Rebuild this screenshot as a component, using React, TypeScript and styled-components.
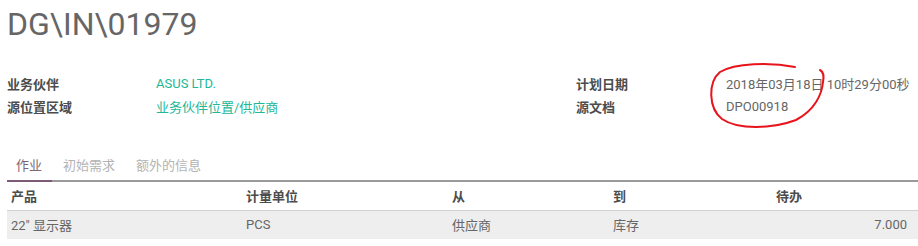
import React from "react";
import styled, { createGlobalStyle } from "styled-components";

const Global = createGlobalStyle`
  html, body { margin: 0; padding: 0; background: #fff; }
  body {
    font-family: Roboto, "Noto Sans CJK SC", sans-serif;
    font-size: 13px;
    color: #4c4c4c;
    width: 918px;
    height: 246px;
    overflow: hidden;
  }
`;

const Sheet = styled.div`
  position: relative;
  padding: 0 0 0 7px;
`;

const Title = styled.h1`
  margin: 0;
  padding-top: 5px;
  height: 60px;
  font-family: Roboto, sans-serif;
  font-weight: 400;
  font-size: 32px;
  line-height: 38px;
  color: #666666;
`;

const Groups = styled.div`
  display: grid;
  grid-template-columns: 569px 1fr;
  margin-top: 7px;
`;

const Group = styled.div<{ $label: number }>`
  display: grid;
  grid-template-columns: ${(p) => p.$label}px 1fr;
  grid-auto-rows: 23px;
  align-items: center;
`;

const Label = styled.div`
  font-weight: 700;
  color: #4c4c4c;
  white-space: nowrap;
`;

const Value = styled.div<{ $link?: boolean }>`
  color: ${(p) => (p.$link ? "#21b799" : "#666666")};
  white-space: nowrap;
`;

const Tabs = styled.div`
  display: flex;
  margin-top: 35px;
  border-bottom: 2px solid #9a9a9a;
`;

const Tab = styled.div<{ $active?: boolean }>`
  padding: 0 10px 0 9px;
  height: 27px;
  line-height: 26px;
  margin-bottom: -2px;
  font-size: 13px;
  color: ${(p) => (p.$active ? "#7c6577" : "#b3b3b3")};
  border-bottom: 2px solid ${(p) => (p.$active ? "#7c5a78" : "transparent")};
  margin-right: 2px;
`;

const Table = styled.table`
  width: 911px;
  border-collapse: collapse;
  table-layout: fixed;
`;

const Th = styled.th<{ $w?: number }>`
  box-sizing: border-box;
  width: ${(p) => (p.$w ? `${p.$w}px` : "auto")};
  text-align: left;
  font-weight: 700;
  color: #4c4c4c;
  height: 28px;
  padding: 0 4px 1px;
  border-bottom: 1px solid #d0d0d0;
`;

const Td = styled.td<{ $right?: boolean }>`
  box-sizing: border-box;
  background: #eeeeee;
  height: 29px;
  padding: 0 4px 1px;
  color: #666666;
  white-space: nowrap;
  text-align: ${(p) => (p.$right ? "right" : "left")};
  &:last-child { padding-right: 11px; }
`;

const Scribble = styled.svg`
  position: absolute;
  left: 0;
  top: 0;
  pointer-events: none;
`;

export default function App() {
  return (
    <>
      <Global />
      <Sheet>
        <Title>DG\IN\01979</Title>
        <Groups>
          <Group $label={149}>
            <Label>业务伙伴</Label>
            <Value $link>ASUS LTD.</Value>
            <Label>源位置区域</Label>
            <Value $link>业务伙伴位置/供应商</Value>
          </Group>
          <Group $label={150}>
            <Label>计划日期</Label>
            <Value>2018年03月18日 10时29分00秒</Value>
            <Label>源文档</Label>
            <Value>DPO00918</Value>
          </Group>
        </Groups>
        <Tabs>
          <Tab $active>作业</Tab>
          <Tab>初始需求</Tab>
          <Tab>额外的信息</Tab>
        </Tabs>
        <Table>
          <thead>
            <tr>
              <Th $w={235}>产品</Th>
              <Th $w={206}>计量单位</Th>
              <Th $w={161}>从</Th>
              <Th $w={163}>到</Th>
              <Th>待办</Th>
            </tr>
          </thead>
          <tbody>
            <tr>
              <Td>22" 显示器</Td>
              <Td>PCS</Td>
              <Td>供应商</Td>
              <Td>库存</Td>
              <Td $right>7.000</Td>
            </tr>
          </tbody>
        </Table>
        <Scribble width="918" height="246" viewBox="0 0 918 246">
          <path
            d="M795 67 C770 62 735 63 720 72 C708 82 708 108 722 119 C738 130 772 129 796 120 C815 110 822 94 823 82 C824 76 824 72 820 70"
            fill="none"
            stroke="#e8141b"
            strokeWidth="2"
            strokeLinecap="round"
          />
        </Scribble>
      </Sheet>
    </>
  );
}
